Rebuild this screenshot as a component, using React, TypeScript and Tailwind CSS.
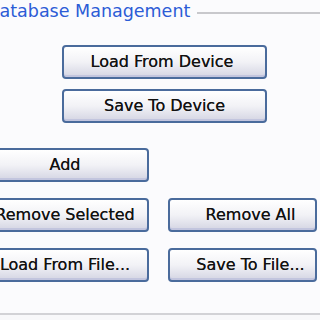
import React from "react";

function Btn({ label, className, textClass = "" }: { label: string; className: string; textClass?: string }) {
  return (
    <div
      className={
        "flex items-center justify-center h-[34px] rounded-[4px] border-2 border-[#4a6b9c] bg-gradient-to-b from-[#ffffff] via-[#f2f2f6] to-[#d4d5e3] shadow-[inset_0_-2px_0_#c2c5de] " +
        className
      }
    >
      <span className={"text-[#111111] text-[16px] leading-none whitespace-nowrap [text-shadow:0_0_0.4px_#333] " + textClass}>{label}</span>
    </div>
  );
}

export default function App() {
  return (
    <div
      className="w-[320px] h-[320px] overflow-hidden bg-[#fbfbfd] flex flex-col"
      style={{ fontFamily: '"DejaVu Sans", Tahoma, Verdana, sans-serif' }}
    >
      <div className="flex items-center mt-[1px] ml-[-14px] h-[22px]">
        <span className="text-[#2c5cd6] text-[17.5px] leading-none whitespace-nowrap">Database Management</span>
        <div className="flex-1 h-[2px] ml-[7px] mt-[1px] bg-[#c8c8cc]" />
      </div>
      <Btn label="Load From Device" className="mt-[22px] ml-[62px] w-[205px]" textClass="mr-[5px]" />
      <Btn label="Save To Device" className="mt-[10px] ml-[62px] w-[205px]" />
      <Btn label="Add" className="mt-[25px] ml-[-19px] w-[168px]" />
      <div className="flex mt-[16px] ml-[-19px] gap-[19px]">
        <Btn label="Remove Selected" className="w-[168px]" />
        <Btn label="Remove All" className="w-[149px]" textClass="ml-[16px]" />
      </div>
      <div className="flex mt-[16px] ml-[-19px] gap-[19px]">
        <Btn label="Load From File..." className="w-[168px]" />
        <Btn label="Save To File..." className="w-[149px]" textClass="ml-[16px]" />
      </div>
      <div className="mt-[31px] h-[2px] bg-[#d2d2d6]" />
      <div className="flex-1 bg-[#f8f8fa]" />
    </div>
  );
}
